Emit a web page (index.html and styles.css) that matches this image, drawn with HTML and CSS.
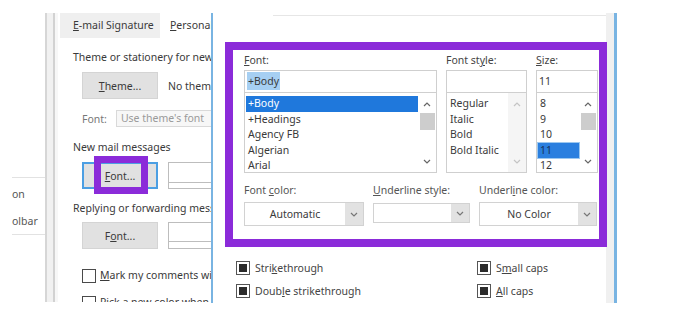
FILE: index.html
```html
<!DOCTYPE html>
<html>
<head>
    <title>Font</title>
    <link rel="stylesheet" href="styles.css">
</head>
<body>
    <div class="screen">

        <!-- options window peeking in from the left -->
        <div class="side-window">
            <div class="side-rule"></div>
            <p class="side-item first">on</p>
            <p class="side-item">olbar</p>
            <div class="side-rule last"></div>
        </div>

        <!-- Signatures and Stationery dialog (behind) -->
        <div class="sig-window">
            <div class="sig-edge"></div>
            <div class="sig-main">
                <div class="tabs">
                    <span class="tab"><u>E</u>-mail Signature</span>
                    <span class="tab active"><u>P</u>ersonal Stationery</span>
                </div>
                <div class="sig-panel">
                    <p class="sig-heading">Theme or stationery for new HTML e-mail message</p>
                    <div class="sig-row theme-row">
                        <button class="win-btn" type="button"><u>T</u>heme...</button>
                        <span class="sig-note">No theme currently selected</span>
                    </div>
                    <div class="sig-row theme-font-row">
                        <span class="sig-label">Font:</span>
                        <span class="sig-field">Use theme's font</span>
                    </div>
                    <p class="sig-heading new-mail">New mail messages</p>
                    <div class="sig-row btn-row">
                        <button class="win-btn focused" type="button">
                            <u>F</u>ont...
                            <span class="mark small"></span>
                        </button>
                        <span class="preview-box"></span>
                    </div>
                    <p class="sig-heading replying">Replying or forwarding messages</p>
                    <div class="sig-row btn-row second">
                        <button class="win-btn" type="button">F<u>o</u>nt...</button>
                        <span class="preview-box low"></span>
                    </div>
                    <label class="sig-check first"><span class="box"></span><span><u>M</u>ark my comments with:</span></label>
                    <label class="sig-check"><span class="box"></span><span>Pick a new color when replying or forwarding</span></label>
                </div>
            </div>
        </div>

        <!-- Font dialog (in front) -->
        <div class="font-dialog">
            <div class="fd-topline"></div>

            <div class="font-grid">
                <div class="field-col">
                    <span class="dlg-label"><u>F</u>ont:</span>
                    <div class="text-input"><span class="sel-text">+Body</span></div>
                    <div class="list">
                        <div class="list-items">
                            <div class="list-item selected">+Body</div>
                            <div class="list-item">+Headings</div>
                            <div class="list-item">Agency FB</div>
                            <div class="list-item">Algerian</div>
                            <div class="list-item">Arial</div>
                        </div>
                        <div class="scrollbar">
                            <span class="arrow"><svg width="8" height="5" viewBox="0 0 8 5"><path d="M1 4L4 1L7 4" fill="none" stroke="#666" stroke-width="1.2"/></svg></span>
                            <span class="thumb"></span>
                            <span class="arrow down"><svg width="8" height="5" viewBox="0 0 8 5"><path d="M1 1L4 4L7 1" fill="none" stroke="#666" stroke-width="1.2"/></svg></span>
                        </div>
                    </div>
                </div>

                <div class="field-col">
                    <span class="dlg-label">Font st<u>y</u>le:</span>
                    <div class="text-input"></div>
                    <div class="list">
                        <div class="list-items">
                            <div class="list-item">Regular</div>
                            <div class="list-item">Italic</div>
                            <div class="list-item">Bold</div>
                            <div class="list-item">Bold Italic</div>
                        </div>
                        <div class="scrollbar disabled">
                            <span class="arrow"><svg width="8" height="5" viewBox="0 0 8 5"><path d="M1 4L4 1L7 4" fill="none" stroke="#c4c4c4" stroke-width="1.2"/></svg></span>
                            <span class="arrow down"><svg width="8" height="5" viewBox="0 0 8 5"><path d="M1 1L4 4L7 1" fill="none" stroke="#c4c4c4" stroke-width="1.2"/></svg></span>
                        </div>
                    </div>
                </div>

                <div class="field-col">
                    <span class="dlg-label"><u>S</u>ize:</span>
                    <div class="text-input">11</div>
                    <div class="list">
                        <div class="list-items">
                            <div class="list-item">8</div>
                            <div class="list-item">9</div>
                            <div class="list-item">10</div>
                            <div class="list-item current">11</div>
                            <div class="list-item">12</div>
                        </div>
                        <div class="scrollbar">
                            <span class="arrow"><svg width="8" height="5" viewBox="0 0 8 5"><path d="M1 4L4 1L7 4" fill="none" stroke="#666" stroke-width="1.2"/></svg></span>
                            <span class="thumb"></span>
                            <span class="arrow down"><svg width="8" height="5" viewBox="0 0 8 5"><path d="M1 1L4 4L7 1" fill="none" stroke="#666" stroke-width="1.2"/></svg></span>
                        </div>
                    </div>
                </div>
            </div>

            <div class="font-row2">
                <div class="field-col color-col">
                    <span class="dlg-label soft">Font <u>c</u>olor:</span>
                    <div class="select">
                        <span class="select-value">Automatic</span>
                        <span class="select-btn"><svg width="8" height="5" viewBox="0 0 8 5"><path d="M1 1L4 4L7 1" fill="none" stroke="#777" stroke-width="1.2"/></svg></span>
                    </div>
                </div>
                <div class="field-col style-col">
                    <span class="dlg-label soft"><u>U</u>nderline style:</span>
                    <div class="select short">
                        <span class="select-value"></span>
                        <span class="select-btn"><svg width="8" height="5" viewBox="0 0 8 5"><path d="M1 1L4 4L7 1" fill="none" stroke="#777" stroke-width="1.2"/></svg></span>
                    </div>
                </div>
                <div class="field-col ucolor-col">
                    <span class="dlg-label soft">Underl<u>i</u>ne color:</span>
                    <div class="select">
                        <span class="select-value">No Color</span>
                        <span class="select-btn"><svg width="8" height="5" viewBox="0 0 8 5"><path d="M1 1L4 4L7 1" fill="none" stroke="#777" stroke-width="1.2"/></svg></span>
                    </div>
                </div>
            </div>

            <div class="effects">
                <label class="check-item"><span class="checkbox"></span><span>Stri<u>k</u>ethrough</span></label>
                <label class="check-item"><span class="checkbox"></span><span>S<u>m</u>all caps</span></label>
                <label class="check-item"><span class="checkbox"></span><span>Doub<u>l</u>e strikethrough</span></label>
                <label class="check-item"><span class="checkbox"></span><span><u>A</u>ll caps</span></label>
            </div>

            <!-- highlight drawn over the dialog -->
            <span class="mark big"></span>
        </div>

    </div>
</body>
</html>
```

FILE: styles.css
```css
/* Font dialog over Signatures and Stationery */
* {
    box-sizing: border-box;
}

body {
    margin: 0;
    background-color: #ffffff;
    font-family: 'Noto Sans', 'Open Sans', sans-serif;
    font-size: 10.5px;
    color: #3a3a3a;
}

p {
    margin: 0;
}

.screen {
    position: relative;
    width: 690px;
    height: 328px;
    overflow: hidden;
}

/* highlight boxes */
.mark {
    position: absolute;
    border: 8px solid #8b2bd9;
}

.mark.big {
    left: 12px;
    top: 29px;
    width: 382px;
    height: 205px;
}

.mark.small {
    left: 10px;
    top: -8px;
    width: 54px;
    height: 38px;
    border-width: 7px;
}

/* left-most window */
.side-window {
    position: absolute;
    left: 0;
    top: 170px;
    width: 45px;
    padding: 7px 0 0 12px;
}

.side-rule {
    height: 1px;
    background-color: #e2e2e2;
}

.side-rule.last {
    margin-top: 5px;
}

.side-item {
    line-height: 15px;
    color: #555555;
    margin-top: 12px;
}

.side-item.first {
    margin-top: 9px;
}

/* signatures dialog */
.sig-window {
    position: absolute;
    left: 45px;
    top: 13px;
    width: 166px;
    height: 289px;
    display: flex;
    background-color: #ffffff;
    overflow: hidden;
}

.sig-edge {
    width: 13px;
    flex-shrink: 0;
    background: linear-gradient(to right, #d6d6d6 0 2px, #f1f1f1 2px 8px, #d2d2d2 8px 10px, #f7f7f7 10px);
}

.sig-main {
    flex: 1;
    min-width: 0;
    white-space: nowrap;
}

.tabs {
    display: flex;
    height: 25px;
    padding-left: 2px;
}

.tab {
    line-height: 25px;
    padding-left: 10px;
    flex-shrink: 0;
}

.tab:first-child {
    width: 100px;
    padding-left: 13px;
    background-color: #efefef;
}

.sig-panel {
    padding: 12px 0 0 15px;
}

.sig-heading {
    line-height: 15px;
}

.sig-heading.new-mail {
    margin-top: 13px;
}

.sig-heading.replying {
    margin-top: 12px;
}

.sig-row {
    display: flex;
    align-items: center;
    gap: 10px;
    padding-left: 9px;
}

.theme-row {
    margin-top: 7px;
}

.theme-font-row {
    margin-top: 11px;
    gap: 9px;
}

.btn-row {
    margin-top: 7px;
}

.btn-row.second {
    margin-top: 6px;
}

.win-btn {
    position: relative;
    flex-shrink: 0;
    width: 76px;
    height: 27px;
    padding: 0;
    font: inherit;
    color: #3a3a3a;
    background-color: #e1e1e1;
    border: 1px solid #d4d4d4;
}

.win-btn.focused {
    border: 2px solid #4c9fe3;
}

.sig-note {
    color: #3a3a3a;
}

.sig-label {
    flex-shrink: 0;
    color: #777777;
}

.sig-field {
    flex: 1;
    height: 17px;
    line-height: 15px;
    padding-left: 4px;
    color: #9a9a9a;
    border: 1px solid #d9d9d9;
    border-right: none;
    background-color: #f7f7f7;
}

.preview-box {
    flex: 1;
    height: 27px;
    border: 1px solid #bdbdbd;
    border-right: none;
    background: linear-gradient(#ffffff 0 19px, #bdbdbd 19px 20px, #ffffff 20px);
}

.preview-box.low {
    background: linear-gradient(#ffffff 0 18px, #bdbdbd 18px 19px, #ffffff 19px);
}

.sig-check {
    display: flex;
    align-items: center;
    gap: 4px;
    padding-left: 9px;
    line-height: 15px;
    margin-top: 12px;
}

.sig-check.first {
    margin-top: 19px;
}

.sig-check .box {
    width: 14px;
    height: 14px;
    flex-shrink: 0;
    border: 1px solid #4a4a4a;
    background-color: #ffffff;
}

/* font dialog */
.font-dialog {
    position: absolute;
    left: 211px;
    top: 13px;
    width: 406px;
    height: 290px;
    background-color: #ffffff;
    border-left: 2px solid #79b4e2;
    border-right: 3px solid #79b4e2;
    box-shadow: inset -8px 0 0 #f0f0f0;
    white-space: nowrap;
}

.fd-topline {
    height: 1px;
    margin: 2px 8px 0 60px;
    background-color: #e6e6e6;
}

.font-grid {
    display: grid;
    grid-template-columns: 193px 81px 62px;
    column-gap: 9px;
    margin: 37px 0 0 31px;
}

.field-col {
    display: flex;
    flex-direction: column;
}

.dlg-label {
    line-height: 14px;
    margin-bottom: 3px;
    color: #444444;
}

.dlg-label.soft {
    margin-bottom: 5px;
    color: #555555;
}

.text-input {
    height: 23px;
    line-height: 21px;
    padding-left: 2px;
    border: 1px solid #cfcfcf;
}

.sel-text {
    background-color: #a6cff2;
    padding: 2px 1px;
}

.list {
    display: flex;
    height: 80px;
    border: 1px solid #cfcfcf;
    border-top: none;
}

.list-items {
    flex: 1;
    padding-top: 3px;
    min-width: 0;
}

.list-item {
    line-height: 15.5px;
    margin-left: 1px;
    padding-left: 2px;
}

.list-item.selected {
    background-color: #1f78dc;
    color: #ffffff;
}

.list-item.current {
    background-color: #2a7fdf;
    color: #17325a;
    outline: 1px solid #9cc8f0;
}

.scrollbar {
    width: 18px;
    display: flex;
    flex-direction: column;
    align-items: center;
    padding: 3px 0 3px;
}

.scrollbar.disabled {
    background-color: #f5f5f5;
}

.arrow {
    height: 16px;
    display: flex;
    align-items: center;
}

.arrow.down {
    margin-top: auto;
}

.thumb {
    width: 15px;
    height: 17px;
    margin-top: 1px;
    background-color: #cdcdcd;
}

/* colour and underline row */
.font-row2 {
    display: flex;
    gap: 9px;
    margin: 10px 0 0 31px;
}

.color-col {
    width: 120px;
}

.style-col {
    width: 97px;
}

.ucolor-col {
    width: 118px;
}

.select {
    display: flex;
    height: 24px;
    border: 1px solid #d2d2d2;
}

.select.short {
    height: 20px;
    margin-top: 1px;
}

.select-value {
    flex: 1;
    text-align: center;
    line-height: 22px;
    color: #3a3a3a;
}

.select-btn {
    width: 18px;
    display: flex;
    align-items: center;
    justify-content: center;
    background-color: #e2e2e2;
}

/* effects checkboxes */
.effects {
    display: grid;
    grid-template-columns: 241px auto;
    row-gap: 7px;
    margin: 34px 0 0 23px;
}

.check-item {
    display: flex;
    align-items: center;
    gap: 5px;
    line-height: 16px;
    color: #444444;
}

.checkbox {
    width: 14px;
    height: 14px;
    padding: 2px;
    border: 1.5px solid #555555;
}

.checkbox::after {
    content: "";
    display: block;
    width: 100%;
    height: 100%;
    background-color: #2b2b2b;
}
```
